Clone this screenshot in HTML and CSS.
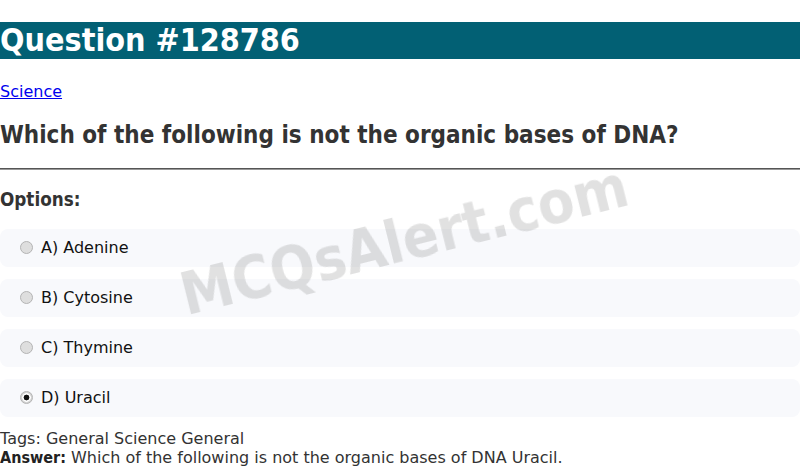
FILE: index.html
```html
<!DOCTYPE html>
<html>
<head>
<meta charset="utf-8">
<link rel="stylesheet" href="styles.css">
</head>
<body>
<h1 class="title">Question #128786</h1>
<p class="cat"><a href="#">Science</a></p>
<h2 class="question">Which of the following is not the organic bases of DNA?</h2>
<hr class="rule">
<h3 class="opts-head">Options:</h3>
<div class="options">
  <label class="option"><input class="radio" type="radio" name="q">A) Adenine</label>
  <label class="option"><input class="radio" type="radio" name="q">B) Cytosine</label>
  <label class="option"><input class="radio" type="radio" name="q">C) Thymine</label>
  <label class="option"><input class="radio" type="radio" name="q" checked>D) Uracil</label>
</div>
<div class="tags">Tags: General Science General</div>
<div class="answer"><b class="answer-label">Answer:</b> Which of the following is not the organic bases of DNA Uracil.</div>
<div class="watermark">MCQsAlert.com</div>
</body>
</html>
```
FILE: styles.css
```css
html, body {
  margin: 0;
  padding: 0;
  background: #fff;
  font-family: "DejaVu Sans", sans-serif;
  font-size: 16px;
}
.title, .question, .opts-head, .watermark, .answer-label {
  font-family: "DejaVu Sans Condensed", "DejaVu Sans", sans-serif;
  font-stretch: condensed;
}
.title {
  margin: 21.6px 0 21.44px;
  background: #026074;
  color: #fff;
  font-size: 32px;
  font-weight: bold;
  line-height: 37px;
}
.cat {
  margin: 23px 0 16px;
}
.cat a {
  color: #0000ee;
}
.question {
  margin: 19.92px 0;
  font-size: 24px;
  color: #333;
}
.rule {
  margin: 8px 0;
  border: 0;
  border-top: 1px solid #555;
  border-bottom: 1px solid #999;
}
.opts-head {
  margin: 18.72px 0;
  font-size: 18.72px;
  color: #333;
}
.options {
  display: flex;
  flex-direction: column;
  gap: 12px;
}
.option {
  display: flex;
  align-items: center;
  height: 38px;
  box-sizing: border-box;
  background: #f8f9fc;
  border-radius: 8px;
  padding: 0 15px;
  color: #111;
}
.radio {
  appearance: none;
  -webkit-appearance: none;
  width: 13px;
  height: 13px;
  box-sizing: border-box;
  margin: 0 8px 1px 5px;
  border: 1px solid #b4b4b4;
  border-radius: 50%;
  background: #dedede;
}
.radio:checked {
  background: radial-gradient(circle, #111 0 2.6px, #fff 3.2px 4px, #d4d4d4 4.6px);
}
.tags {
  margin-top: 12px;
  color: #333;
}
.answer {
  color: #333;
}
.answer-label {
  color: #222;
}
.watermark {
  position: fixed;
  left: 404px;
  top: 240px;
  transform: translate(-50%, -50%) rotate(-14deg);
  font-size: 59px;
  font-weight: bold;
  color: rgba(128, 128, 128, 0.24);
  white-space: nowrap;
  pointer-events: none;
}
```
